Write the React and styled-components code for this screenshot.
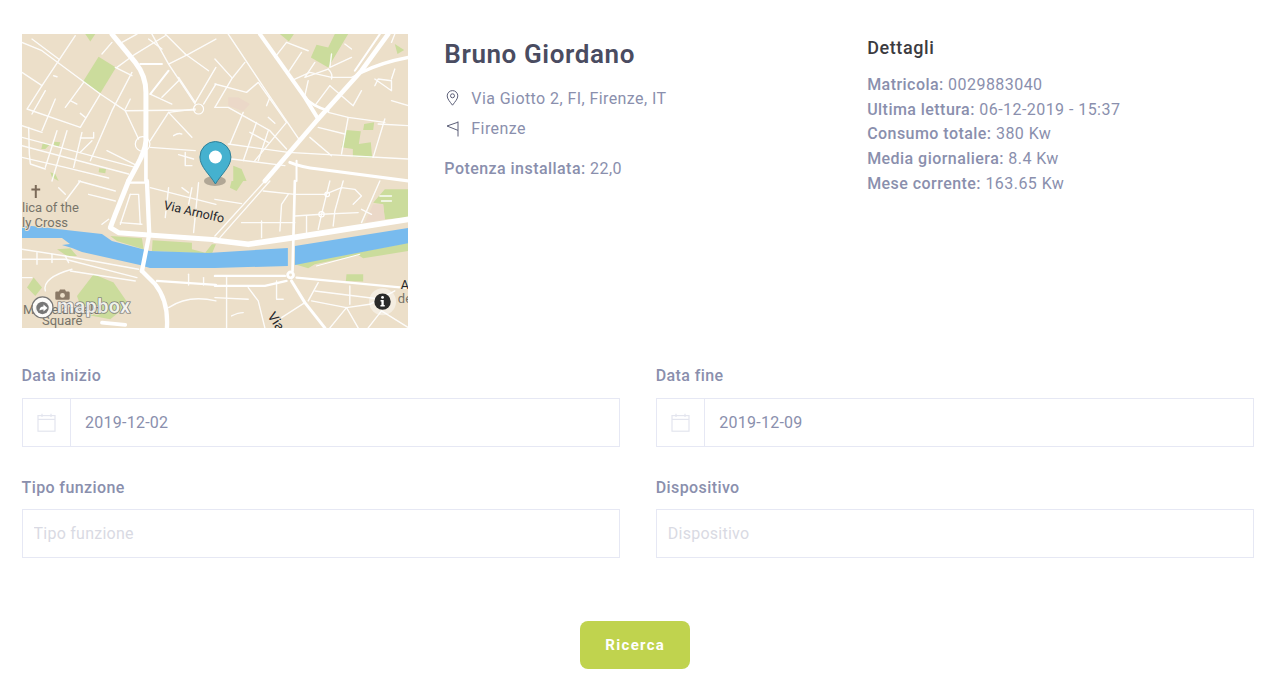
import React from 'react';
import styled, { createGlobalStyle } from 'styled-components';

const GlobalStyle = createGlobalStyle`
  html, body {
    margin: 0;
    padding: 0;
    background: #fff;
    font-family: Roboto, "Liberation Sans", sans-serif;
  }
`;

const Page = styled.div`
  width: 1232.5px;
  padding: 34px 26px 21px 21.5px;
  display: flex;
  flex-direction: column;
`;

const TopRow = styled.section`
  display: grid;
  grid-template-columns: repeat(3, 1fr);
  column-gap: 36px;
  height: 294px;
`;

const MapBox = styled.svg`
  display: block;
  width: 100%;
  height: 294px;
  background: #ecdfc9;
`;

const Name = styled.h2`
  margin: 3px 0 0;
  font-size: 26px;
  line-height: 34px;
  font-weight: 600;
  letter-spacing: 0.6px;
  color: #4a4c61;
`;

const Title = styled.h3`
  margin: 2px 0 12px;
  font-size: 18px;
  line-height: 24px;
  font-weight: 500;
  letter-spacing: 0.6px;
  color: #3b3b40;
`;

const IconRow = styled.div`
  display: flex;
  align-items: center;
  height: 24px;
  margin-top: ${p => p.$top}px;
  font-size: 16px;
  letter-spacing: 0.42px;
  color: #8a8fad;
`;

const IconSlot = styled.span`
  display: flex;
  width: 27px;
  flex: none;
  svg {
    display: block;
    margin-left: 2px;
  }
`;

const Line = styled.div`
  font-size: 16px;
  line-height: 24.7px;
  letter-spacing: 0.45px;
  color: #8a8fad;
  margin-top: ${p => p.$top || 0}px;
  b {
    font-weight: 500;
  }
`;

const DetailList = styled.div`
  padding-top: 1px;
`;

const FormGrid = styled.form`
  display: grid;
  grid-template-columns: 1fr 1fr;
  column-gap: 36px;
  margin-top: 36px;
`;

const Field = styled.div`
  display: flex;
  flex-direction: column;
  margin-bottom: 28.8px;
`;

const Label = styled.label`
  font-size: 16px;
  line-height: 24px;
  font-weight: 500;
  letter-spacing: 0.4px;
  color: #8a8fad;
  margin-bottom: 9.8px;
`;

const InputGroup = styled.div`
  display: flex;
  height: 49px;
  box-sizing: border-box;
  border: 1px solid #e6e8f4;
`;

const Addon = styled.span`
  width: 47.5px;
  flex: none;
  display: flex;
  align-items: center;
  justify-content: center;
  border-right: 1px solid #e6e8f4;
`;

const Input = styled.input`
  flex: 1;
  min-width: 0;
  border: 0;
  outline: 0;
  background: transparent;
  padding: 0 ${p => (p.$dated ? 14 : 11)}px;
  font-family: inherit;
  font-size: 16px;
  letter-spacing: 0.25px;
  color: #8a8fad;
  &::placeholder {
    color: #d9dae3;
    opacity: 1;
  }
`;

const Actions = styled.div`
  display: flex;
  justify-content: center;
  margin-top: 33.8px;
  padding-right: 5px;
`;

const SearchButton = styled.button`
  width: 110px;
  height: 48px;
  border: 0;
  border-radius: 8px;
  background: #c0d34e;
  color: #fff;
  font-family: inherit;
  font-size: 15px;
  font-weight: 700;
  letter-spacing: 1.3px;
`;

const PinIcon = () => (
  <svg width="13" height="16" viewBox="0 0 13 16" fill="none" stroke="#5c5f78" strokeWidth="1">
    <path d="M6.5 15.2C3.8 11.6 1.200 8.800 1.200 5.900a5.300 5.300 0 0 1 10.600 0c0 2.900-2.600 5.700-5.300 9.300z" />
    <circle cx="6.500" cy="5.800" r="2" />
  </svg>
);

const FlagIcon = () => (
  <svg width="13" height="16" viewBox="0 0 13 16" fill="none" stroke="#5c5f78" strokeWidth="1">
    <path d="M12 .5v15M12 1.200 1 5l11 4.400" />
  </svg>
);

const CalendarIcon = () => (
  <svg width="19" height="19" viewBox="0 0 19 19" fill="none" stroke="#e3e5ee" strokeWidth="1.200">
    <rect x="1" y="2.600" width="17" height="15.600" />
    <path d="M1 6.400h17" />
    <path d="M5 .8v3.200M14 .8v3.200" />
  </svg>
);

// traced per map quarter, in 3x crop coordinates
const quarters = [
  {
    at: 'translate(0 0) scale(.3333)',
    green: [
      'M230 68L282 100L235 178L183 143z',
      'M190 0H220L205 22z',
      'M62 328L85 330L70 345L58 345z',
      'M97 323L115 325L110 338L95 335z',
      'M232 403L252 405L250 418L230 415z',
      'M85 415L100 420L110 441L90 430z',
    ],
    minor: [
      'M0 25L60 50L235 180L310 230',
      'M30 15L110 75',
      'M160 5L60 155L15 225L175 280',
      'M0 115L60 155',
      'M185 145L130 220',
      'M235 180L175 280',
      'M100 195L60 290',
      'M70 170L30 240',
      'M310 230L520 228',
      'M310 230L350 315',
      'M325 195L310 225',
      'M280 100L330 125',
      'M240 60L270 25',
      'M285 100L340 60L430 5',
      'M300 25L345 0',
      'M390 0L440 90L520 210',
      'M430 0L490 60',
      'M440 90L500 60L582 15',
      'M380 15L420 45',
      'M490 60L560 110',
      'M420 190L470 140',
      'M470 130L520 205',
      'M385 180L450 210',
      'M520 225L440 235L385 320',
      'M440 235L510 310',
      'M545 210L582 150',
      'M520 205L582 100',
      'M330 115L270 230L205 380',
      'M0 275L60 295',
      'M0 310L340 400',
      'M0 335L320 420',
      'M0 370L130 400L260 432',
      'M105 290L70 400',
      'M135 290L90 441',
      'M180 295L155 400',
      'M175 312H215V295',
      'M175 355L210 320',
      'M255 350L345 395',
      'M385 340L520 350',
      'M470 362L515 375',
      'M490 355V395H510',
      'M20 280L22 360L25 390L70 405',
      'M455 305Q470 295 480 300',
      'M95 125L105 128',
      'M145 200L165 210',
      'M175 238L190 250',
    ],
    major: [
      ['M270 0L340 85Q372 125 372 175L372 320Q370 350 345 395L320 441', 15],
      ['M372 320V441', 11],
      ['M355 90H420', 6],
      ['M385 180L440 110', 6],
    ],
    rings: [[362, 330, 22], [530, 225, 15]],
  },
  {
    at: 'translate(193 0) scale(.3333)',
    green: [
      'M195 0H237L222 22z',
      'M360 0H400L340 100L288 70L305 32L340 40z',
      'M540 30L568 48L548 60z',
      'M392 288L438 292L432 330L468 325L472 372L414 368V345L380 340z',
      'M448 270L478 265L475 288L445 288z',
      'M55 395L80 405L95 441H55z',
    ],
    pink: ['M40 190H70L105 210L85 232L40 215z'],
    minor: [
      'M40 0L160 180L255 320',
      'M0 75L50 130',
      'M90 85L50 135L0 220',
      'M0 150L95 175L130 145L215 265L120 380',
      'M0 220H40L165 290L215 345',
      'M85 235L45 330',
      'M125 265L85 380',
      'M105 295L160 325',
      'M160 290L130 380',
      'M40 330L220 355L582 375',
      'M50 375L210 395',
      'M215 25L180 70',
      'M215 25L280 50',
      'M260 55L220 115',
      'M230 140L285 115L350 130L410 130L440 115',
      'M300 85L270 130L340 105',
      'M340 105Q355 120 350 135',
      'M350 60L345 100L410 70',
      'M280 140L270 185',
      'M390 30L410 45',
      'M345 155L415 215L440 170',
      'M345 155L300 215',
      'M340 235L400 250L510 265',
      'M400 250L380 360',
      'M510 255L475 370',
      'M310 280L390 300',
      'M285 310L350 365',
      'M480 135L530 170V140L490 135L480 155',
      'M490 270L582 275',
      'M530 200L582 215',
      'M540 105L530 135',
      'M530 25L540 0',
      'M160 250L180 268',
      'M165 190L155 215',
    ],
    major: [
      ['M135 0L270 190L310 255', 12],
      ['M520 0L440 110L310 255L150 441', 14],
      ['M495 0L420 110', 6],
      ['M440 115Q500 85 582 70', 10],
      ['M225 385Q260 400 310 405L582 441', 9],
      ['M270 190Q290 215 340 230', 8],
      ['M245 380V441', 6],
    ],
  },
  {
    at: 'translate(0 147) scale(.3333)',
    green: [
      'M265 165L360 172L365 205L285 180z',
      'M392 178L510 185V205L550 215L570 190H582L570 218L390 210z',
      'M105 205L145 202L165 225H135z',
      'M215 280L275 305L320 370L265 415L185 400L165 345z',
      'M35 290L60 320L40 345L15 320z',
    ],
    minor: [
      'M325 40L295 130',
      'M325 40H350L355 130',
      'M295 125L360 130',
      'M0 205L130 225L350 265',
      'M0 235H130L345 290',
      'M145 270L340 300',
      'M45 215V250',
      'M90 220V245',
      'M130 225L140 245',
      'M0 290H30',
      'M70 330Q60 290 150 265',
      'M385 20L582 70',
      'M280 30L170 0',
      'M130 60L175 0',
      'M130 40L110 20',
      'M200 40L280 60',
      'M500 70L510 20',
      'M440 20L430 110',
      'M530 5L515 155',
      'M260 115L240 130',
      'M500 280V312',
      'M440 380Q500 340 582 360',
      'M545 290V312',
      'M480 20L500 35',
    ],
    major: [
      ['M320 0L280 100L265 140L290 155L380 162L582 176', 15],
      ['M375 0L382 160L360 270', 13],
      ['M360 270L400 310Q440 360 435 441', 13],
      ['M405 300L582 312', 7],
      ['M315 5H370', 7],
      ['M240 425L310 432', 11],
    ],
  },
  {
    at: 'translate(193 147) scale(.3333)',
    green: [
      'M50 0H85L65 30L45 20z',
      'M510 25H582V110L510 115L505 70L475 65z',
      'M240 250L582 185V210L445 232L430 222L300 250L280 262z',
      'M395 280H445V302L393 300z',
    ],
    pink: ['M450 125L475 70H505L510 115z'],
    minor: [
      'M165 0L15 170',
      'M150 0L0 165',
      'M0 55L80 68',
      'M80 125H240',
      'M145 30L240 40H330L380 20L420 25L440 45L415 70',
      'M140 120V170',
      'M220 40L200 70L195 150',
      'M275 105V155',
      'M345 0L320 100L310 145',
      'M385 0L360 90L355 135',
      'M240 105L320 100L430 95',
      'M495 0L440 125',
      'M440 85L470 100',
      'M495 45H530M500 60H530',
      'M35 290V315',
      'M100 320L130 360L150 441',
      'M185 300V355H205',
      'M0 350L100 355',
      'M35 315V441',
      'M310 305L280 360',
      'M300 330L500 355',
      'M290 360L395 380L465 370L540 330',
      'M405 315V370',
      'M395 380L345 441',
      'M395 380L430 441',
      'M500 390L460 441',
      'M500 390L582 441',
      'M270 365L200 410',
      'M50 405Q70 395 85 395',
    ],
    major: [
      ['M0 178L100 190L235 170L582 115', 17],
      ['M240 0L233 270', 8],
      ['M0 285H210', 7],
      ['M0 315H150L215 300', 7],
      ['M245 290L582 322', 7],
      ['M230 300L270 365L330 441', 9],
      ['M305 255L435 220', 3],
    ],
    rings: [[337, 40, 7], [320, 100, 8]],
    blobs: [[227, 282, 13]],
  },
];

const Greenery = ({ q }) => (
  <g transform={q.at}>
    {q.green.map(d => <path key={d} d={d} fill="#cbdc9c" />)}
    {(q.pink || []).map(d => <path key={d} d={d} fill="#ebd8c8" />)}
  </g>
);

const Streets = ({ q }) => (
  <g transform={q.at} fill="none" stroke="#fff" strokeLinecap="round" strokeLinejoin="round">
    <g strokeWidth="4.2" opacity=".92">
      {q.minor.map(d => <path key={d} d={d} />)}
    </g>
    {(q.rings || []).map(([x, y, r]) => <circle key={x} cx={x} cy={y} r={r} strokeWidth="3.5" />)}
  </g>
);

const Highways = ({ q }) => (
  <g transform={q.at} fill="none" stroke="#fff" strokeLinecap="round" strokeLinejoin="round">
    {q.major.map(([d, w]) => <path key={d} d={d} strokeWidth={w} />)}
    {(q.blobs || []).map(([x, y, r]) => (
      <g key={x}>
        <circle cx={x} cy={y} r={r} fill="#fff" stroke="none" />
        <circle cx={x} cy={y} r={r / 3} fill="#ecdfc9" stroke="none" />
      </g>
    ))}
  </g>
);

const River = () => (
  <g fill="#78bbee">
    <path d="M0 192L10 192L53 197L80 200L90 207L120 215L128 217L186 219L266 214V232L193 234L128 234L118 231L60 218L50 214L40 211L48 210L40 204L0 204z" />
    <path d="M273 212L387 194V209L273 231z" />
  </g>
);

const MapArt = () => (
  <MapBox viewBox="0 0 387 294" role="img" aria-label="Mappa">
    {quarters.map(q => <Greenery key={q.at} q={q} />)}
    {quarters.map(q => <Streets key={q.at} q={q} />)}
    <River />
    {quarters.map(q => <Highways key={q.at} q={q} />)}
    <g fontFamily="Roboto, sans-serif" fontSize="13" fill="#77746a" stroke="#ecdfc9" strokeWidth="2" paintOrder="stroke">
      <text x="0" y="178">lica of the</text>
      <text x="0" y="193">ly Cross</text>
      <text x="1" y="280">Michelangelo</text>
      <text x="20" y="291">Square</text>
      <text x="376" y="269">de</text>
    </g>
    <g fontFamily="Roboto, sans-serif" fontSize="12.500" fill="#23252a" stroke="#ecdfc9" strokeWidth="2" paintOrder="stroke">
      <text transform="translate(141 175) rotate(13)">Via Arnolfo</text>
      <text transform="translate(245 282) rotate(56)" fontSize="13.500">Via</text>
      <text x="379" y="255">A</text>
    </g>
    <path d="M12.800 151h2v3.600h3.400v1.800h-3.400V164h-2v-7.600H9.400v-1.800h3.400z" fill="#7b6a58" />
    <path d="M34.500 257.500h2.500l1-2h5l1 2h2.500a1.200 1.200 0 0 1 1.200 1.200v5.800a1.200 1.200 0 0 1-1.200 1.200h-12a1.200 1.200 0 0 1-1.200-1.200v-5.800a1.200 1.200 0 0 1 1.200-1.200z" fill="#8a7966" />
    <circle cx="40.500" cy="261.500" r="2.400" fill="#ecdfc9" />
    <text x="35" y="279.500" fontFamily="Roboto, sans-serif" fontSize="20" fontWeight="700" fill="#fff" fillOpacity=".8" stroke="#6f6f6f" strokeWidth="1.200" paintOrder="stroke" letterSpacing=".3">mapbox</text>
    <circle cx="20.500" cy="273.500" r="10.500" fill="#fff" fillOpacity=".9" stroke="#777" strokeWidth="1.200" />
    <circle cx="20.500" cy="274" r="6.200" fill="#777" />
    <path d="M17.500 276.500q0-4 4-4v-2l4 3.500-4 3.500v-2q-2 0-4 1z" fill="#fff" />
    <circle cx="360.700" cy="267.700" r="13.500" fill="#fff" fillOpacity=".45" />
    <circle cx="360.700" cy="267.700" r="8.200" fill="#2a2a2a" />
    <circle cx="360.700" cy="263.500" r="1.400" fill="#fff" />
    <path d="M358.700 266h3.200v5h1v1.500h-4.300V271h1v-3.500h-.9z" fill="#fff" />
    <ellipse cx="193" cy="147" rx="11" ry="5" fill="#6b6458" opacity=".45" />
    <path d="M193.500 150C188 140.500 178 133 178 123a15.500 15.500 0 0 1 31 0C209 133 199 140.500 193.500 150z" fill="#45b1cf" stroke="#2f7f98" strokeWidth="1" />
    <circle cx="193.500" cy="123" r="6.500" fill="#fff" />
  </MapBox>
);

const DateField = ({ id, label, value }) => (
  <Field>
    <Label htmlFor={id}>{label}</Label>
    <InputGroup>
      <Addon><CalendarIcon /></Addon>
      <Input id={id} $dated type="text" defaultValue={value} />
    </InputGroup>
  </Field>
);

const TextField = ({ id, label }) => (
  <Field>
    <Label htmlFor={id}>{label}</Label>
    <InputGroup>
      <Input id={id} type="text" placeholder={label} />
    </InputGroup>
  </Field>
);

const details = [
  ['Matricola:', '0029883040'],
  ['Ultima lettura:', '06-12-2019 - 15:37'],
  ['Consumo totale:', '380 Kw'],
  ['Media giornaliera:', '8.4 Kw'],
  ['Mese corrente:', '163.65 Kw'],
];

export default function App() {
  return (
    <Page>
      <GlobalStyle />
      <TopRow>
        <MapArt />
        <div>
          <Name>Bruno Giordano</Name>
          <IconRow $top={15}>
            <IconSlot><PinIcon /></IconSlot>
            Via Giotto 2, FI, Firenze, IT
          </IconRow>
          <IconRow $top={6.5}>
            <IconSlot><FlagIcon /></IconSlot>
            Firenze
          </IconRow>
          <Line $top={16}><b>Potenza installata:</b> 22,0</Line>
        </div>
        <div>
          <Title>Dettagli</Title>
          <DetailList>
            {details.map(([k, v]) => (
              <Line key={k}><b>{k}</b> {v}</Line>
            ))}
          </DetailList>
        </div>
      </TopRow>
      <FormGrid>
        <DateField id="start" label="Data inizio" value="2019-12-02" />
        <DateField id="end" label="Data fine" value="2019-12-09" />
        <TextField id="type" label="Tipo funzione" />
        <TextField id="device" label="Dispositivo" />
      </FormGrid>
      <Actions>
        <SearchButton type="button">Ricerca</SearchButton>
      </Actions>
    </Page>
  );
}
